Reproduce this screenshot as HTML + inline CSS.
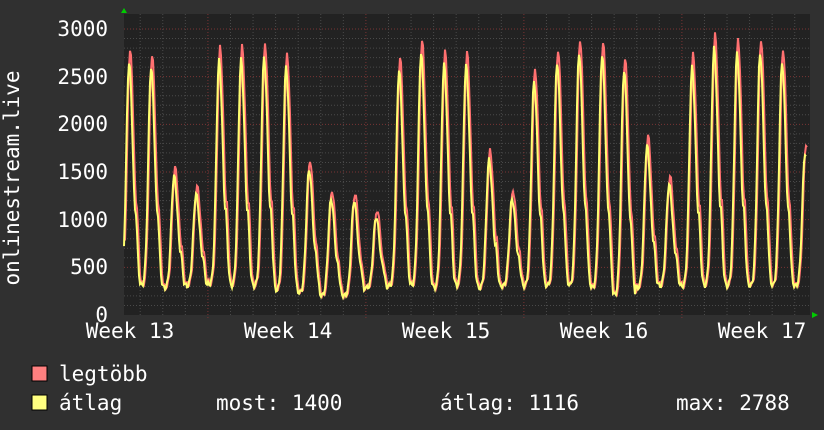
<!DOCTYPE html>
<html><head><meta charset="utf-8"><style>
html,body{margin:0;padding:0;background:#303030;}
svg{display:block}
text{font-family:"DejaVu Sans Mono","Liberation Mono",monospace;fill:#fff;font-size:21px}
</style></head><body>
<svg id="s" width="824" height="430" xmlns="http://www.w3.org/2000/svg">
<rect width="824" height="430" fill="#303030"/>
<rect x="124" y="14" width="686" height="301" fill="#222"/>
<g id="grid"></g>
<path id="red" fill="none" stroke="#ff7070" stroke-width="2"/>
<path id="yel" fill="none" stroke="#ffff70" stroke-width="2"/>
<polygon points="121,13 127,13 124,8" fill="#0c0"/>
<polygon points="812,312 812,318 818,315" fill="#0c0"/>
<g text-anchor="end">
<text x="108" y="36">3000</text><text x="108" y="84">2500</text><text x="108" y="131">2000</text>
<text x="108" y="179">1500</text><text x="108" y="227">1000</text><text x="108" y="274">500</text>
<text x="108" y="322">0</text></g>
<text transform="translate(19,178) rotate(-90)" text-anchor="middle">onlinestream.live</text>
<g text-anchor="middle">
<text x="130" y="338">Week 13</text><text x="288" y="338">Week 14</text><text x="446" y="338">Week 15</text>
<text x="604" y="338">Week 16</text><text x="762" y="338">Week 17</text></g>
<rect x="32" y="366" width="15" height="15" fill="#ff8080" stroke="#000"/>
<rect x="32" y="395" width="15" height="15" fill="#ffff80" stroke="#000"/>
<text x="59" y="381">legtöbb</text>
<text x="59" y="410">átlag</text>
<text x="216" y="410">most: 1400</text>
<text x="440" y="410">átlag: 1116</text>
<text x="676" y="410">max: 2788</text>
</svg>
<script>
var g=document.getElementById("grid"),h="";
for(var v=100;v<=3000;v+=100){var y=315-v*286/3000;var maj=v%500==0;
h+='<line x1="124" x2="810" y1="'+y+'" y2="'+y+'" stroke="'+(maj?'#7a3434':'#4a4a4a')+'" stroke-dasharray="1,2"/>';}
for(var x=140.2;x<810;x+=22.57){var k=Math.round((x-140.2)/22.57);var maj=(k%7==3);
h+='<line y1="14" y2="'+(maj?319:315)+'" x1="'+x+'" x2="'+x+'" stroke="'+(maj?'#7a3434':'#4a4a4a')+'" stroke-dasharray="1,2"/>';}
g.innerHTML=h;
var px=[129,151,174,196,219,241,264,286,309,331,354,376,399,421,444,466,489,512,534,557,579,602,624,647,669,692,714,737,760,782,805];
var pk=[2650,2600,1480,1250,2650,2700,2700,2650,1550,1250,1200,950,2550,2750,2650,2600,1650,1200,2450,2650,2750,2750,2650,1700,1350,2600,2800,2750,2750,2650,1700];
var mn=[300,300,300,280,300,320,300,300,250,230,200,200,280,300,300,280,300,280,300,300,300,300,280,200,280,300,300,300,300,300,300];
function val(x){
 var best=0,m=300;
 for(var i=0;i<px.length;i++){
  var d=(x-px[i])/22.57;
  var s=d<0?0.17:0.24;
  var f=Math.exp(-Math.pow(d/s,2));
  if(d>0&&d<0.6)f=Math.max(f,0.35*Math.exp(-Math.pow((d-0.28)/0.12,2)));
  var v=(pk[i]-mn[i])*f;
  if(v>best)best=v;
  if(Math.abs(d)<0.5)m=mn[Math.min(i+1,30)];
 }
 return m+best;
}
var r="",yy="";
for(var x=124;x<=806;x+=1){var v=val(x);var n=Math.sin(x*1.7)*25;
var y1=315-(v+n)*286/3000;var y2=315-((v+n)*1.04+30*(v>600))*286/3000;
yy+=(x==124?"M":"L")+x+","+y1.toFixed(1);r+=(x==124?"M":"L")+(x+1)+","+y2.toFixed(1);}
document.getElementById("red").setAttribute("d",r);
document.getElementById("yel").setAttribute("d",yy);
</script>
</body></html>
